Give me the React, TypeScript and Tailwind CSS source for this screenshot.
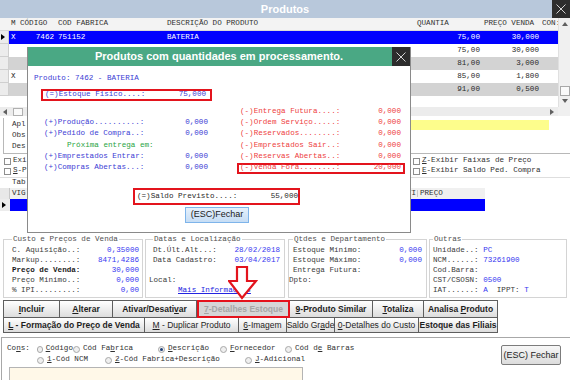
import React from 'react'

type Row = { m?: string; cod?: string; fab?: string; desc?: string; qtd: string; preco: string; sel?: boolean; grey?: boolean }

// rows 2-5 sit under the dialog, only their right-hand columns show
const rows: Row[] = [
  { m: 'X', cod: '7462', fab: '751152', desc: 'BATERIA', qtd: '75,00', preco: '30,000', sel: true },
  { qtd: '75,00', preco: '30,000' },
  { qtd: '81,00', preco: '3,000', grey: true },
  { m: 'X', qtd: '85,00', preco: '1,800' },
  { qtd: '91,00', preco: '0,500', grey: true },
]

const CloseX = () => (
  <svg width="10" height="10" viewBox="0 0 10 10">
    <path d="M0.5 0.5L9.5 9.5M9.5 0.5L0.5 9.5" stroke="#d4d4d4" strokeWidth="1" />
  </svg>
)

const Tri = ({ dir, color = '#606060' }: { dir: 'up' | 'down' | 'left' | 'right'; color?: string }) => {
  const d = {
    up: 'M0 4L3 0L6 4Z',
    down: 'M0 0L6 0L3 4Z',
    left: 'M4 0L4 6L0 3Z',
    right: 'M0 0L4 3L0 6Z',
  }[dir]
  return (
    <svg width="6" height="6" viewBox="0 0 6 6">
      <path d={d} fill={color} />
    </svg>
  )
}

const U = ({ children }: { children: React.ReactNode }) => <span className="underline">{children}</span>

function MainTable() {
  return (
    <div className="flex h-[89px]">
      <div className="flex w-[558px] flex-col">
        {/* header */}
        <div className="flex h-[13px] items-center border-b border-[#d8d8d8] bg-[#f3f3f3] text-[#303030]">
          <div className="w-[9px]" />
          <div className="w-[10px] pl-[2px]">M</div>
          <div className="w-[37px] pl-[1px]">CÓDIGO</div>
          <div className="w-[109px] pl-[2px]">COD FABRICA</div>
          <div className="w-[249px] pl-[2px]">DESCRIÇÃO DO PRODUTO</div>
          <div className="w-[68px] pl-[3px]">QUANTIA</div>
          <div className="w-[60px] pl-[2px]">PREÇO VENDA</div>
          <div className="w-[16px] overflow-hidden whitespace-nowrap">CON:</div>
        </div>
        {rows.map((r, i) => (
          <div key={i} className="flex h-[13px]">
            <div className="flex h-full w-[9px] items-center justify-center border-r border-b border-[#cfcfcf] bg-[#ececec]">
              {r.sel && <Tri dir="right" color="#000" />}
            </div>
            <div
              className={`flex flex-1 items-center ${
                r.sel ? 'bg-[#0000ff] text-white' : r.grey ? 'bg-[#d3d3d3] text-[#2a2a2a]' : 'bg-white text-[#2a2a2a]'
              }`}
            >
              <div className="w-[10px] pl-[2px]">{r.m}</div>
              <div className="w-[37px] pr-[2px] text-right">{r.cod}</div>
              <div className="w-[109px] pl-[2px]">{r.fab}</div>
              <div className="w-[249px] pl-[2px]">{r.desc}</div>
              <div className="w-[68px] pr-[2px] text-right">{r.qtd}</div>
              <div className="w-[60px] pr-[3px] text-right">{r.preco}</div>
              <div className="w-[15px]" />
            </div>
          </div>
        ))}
      </div>
      {/* vertical scrollbar */}
      <div className="flex w-[12px] flex-col items-center border-l border-[#e0e0e0] bg-[#f0f0f0]">
        <div className="flex h-[13px] items-center">
          <Tri dir="up" />
        </div>
        <div className="flex-1" />
        <div className="h-[10px] w-[10px] border border-[#a8a8a8] bg-[#fafafa]" />
        <div className="flex h-[11px] items-center">
          <Tri dir="down" />
        </div>
      </div>
    </div>
  )
}

function HScroll() {
  return (
    <div className="flex h-[9px] bg-[#ececec]">
      <div className="flex w-[558px] items-center">
        <div className="flex w-[11px] justify-center">
          <Tri dir="left" />
        </div>
        <div className="ml-[2px] h-[8px] w-[10px] border border-[#b0b0b0] bg-[#fafafa]" />
        <div className="flex-1" />
        <div className="flex w-[10px] justify-center">
          <Tri dir="right" />
        </div>
      </div>
      <div className="w-[12px] bg-[#f0f0f0]" />
    </div>
  )
}

// only the part left of the dialog shows
function InfoPanel() {
  return (
    <div className="h-[38px] pt-[2px]">
      <div className="ml-[3px] h-[36px] border-l border-b border-[#b8b8b8] pt-[1px] text-[#303030]">
        <div className="flex h-[11px] items-center pl-[8px]">
          <span className="w-[52px]">Apl</span>
          <div className="h-[10px] w-[485px] bg-[#fdfd8c]" />
        </div>
        <div className="flex h-[11px] items-center pl-[8px]">Obs</div>
        <div className="flex h-[11px] items-center pl-[8px]">Des</div>
      </div>
    </div>
  )
}

const Check = ({ children }: { children: React.ReactNode }) => (
  <div className="flex h-[10px] items-center">
    <div className="mr-[2px] h-[7px] w-[7px] border border-[#8e8e8e] bg-white" />
    <span className="text-[#303030]">{children}</span>
  </div>
)

function Checks() {
  return (
    <div className="flex h-[23px] pt-[2px]">
      <div className="w-[409px] pl-[4px]">
        <Check>Exi</Check>
        <Check>
          <U>S</U>-P
        </Check>
      </div>
      <div className="pl-[4px]">
        <Check>
          <U>Z</U>-Exibir Faixas de Preço
        </Check>
        <Check>
          <U>E</U>-Exibir Saldo Ped. Compra
        </Check>
      </div>
    </div>
  )
}

function PriceGrid() {
  return (
    <div className="h-[35px]">
      <div className="flex h-[11px] items-center border-t border-[#dedede] pl-[12px] text-[#303030]">Tab</div>
      <div className="flex h-[11px] w-[485px] items-center bg-[#f0f0f0] text-[#303030]">
        <div className="h-full w-[10px] border-r border-[#c8c8c8] bg-[#e8e8e8]" />
        <div className="w-[80px] pl-[2px]">VIG</div>
        <div className="w-[328px] border-r border-[#c8c8c8] pr-[1px] text-right whitespace-nowrap">TI</div>
        <div className="flex-1 pl-[2px]">PREÇO</div>
      </div>
      <div className="flex h-[12px] w-[485px]">
        <div className="flex w-[10px] items-center justify-center bg-[#ececec]">
          <Tri dir="right" color="#000" />
        </div>
        <div className="flex-1 bg-[#0000ff]" />
      </div>
    </div>
  )
}

const Line = ({ label, value, bold }: { label: string; value?: string; bold?: boolean }) => (
  <div className="flex h-[10.1px] items-center justify-between whitespace-nowrap">
    <span className={bold ? 'font-bold text-[#1a1a1a]' : ''}>{label}</span>
    {value && <span className="text-[#3838f0]">{value}</span>}
  </div>
)

function Groups() {
  return (
    <div className="flex h-[67px] pt-[3px] text-[#3a3a3a]">
      <fieldset className="ml-[3px] h-[62px] w-[140px] border border-[#d4d4d4] pr-[3px] pl-[8px]">
        <legend className="px-[1px] text-[#505050]">Custo e Preços de Venda</legend>
        <div className="pt-[2px]">
          <Line label="C. Aquisição..:" value="0,35000" />
          <Line label="Markup........:" value="8471,4286" />
          <Line label="Preço de Venda:" value="30,000" bold />
          <Line label="Preço Minimo..:" value="0,000" />
          <Line label="% IPI.........:" value="0,00" />
        </div>
      </fieldset>
      <fieldset className="ml-[2px] h-[62px] w-[140px] border border-[#d4d4d4] pr-[4px] pl-[7px]">
        <legend className="px-[1px] text-[#505050]">Datas e Localização</legend>
        <div className="pt-[2px]">
          <Line label="Dt.Últ.Alt...:" value="28/02/2018" />
          <Line label="Data Cadastro:" value="03/04/2017" />
          <div className="h-[10.1px]" />
          <div className="-ml-[4px] flex h-[10.1px] items-center">Local:</div>
          <div className="flex h-[10.1px] items-center pl-[25px]">
            <span className="text-[#2424e0] underline">Mais Informações</span>
          </div>
        </div>
      </fieldset>
      <fieldset className="ml-[3px] h-[62px] w-[139px] border border-[#d4d4d4] pr-[4px] pl-[4px]">
        <legend className="px-[1px] text-[#505050]">Qtdes e Departamento</legend>
        <div className="pt-[2px]">
          <Line label="Estoque Mínimo:" value="0,000" />
          <Line label="Estoque Máximo:" value="0,000" />
          <Line label="Entrega Futura:" />
          <div className="-ml-[4px] flex h-[10.1px] items-center">Dpto:</div>
        </div>
      </fieldset>
      <fieldset className="ml-[2px] h-[62px] w-[138px] border border-[#d4d4d4] pl-[3px]">
        <legend className="px-[1px] text-[#505050]">Outras</legend>
        <div className="pt-[2px] whitespace-pre">
          <div className="flex h-[10.1px] items-center">
            Unidade..: <span className="text-[#3838f0]">PC</span>
          </div>
          <div className="flex h-[10.1px] items-center">
            NCM......: <span className="text-[#3838f0]">73261900</span>
          </div>
          <div className="flex h-[10.1px] items-center">Cod.Barra:</div>
          <div className="flex h-[10.1px] items-center">
            CST/CSOSN: <span className="text-[#3838f0]">0500</span>
          </div>
          <div className="flex h-[10.1px] items-center">
            IAT......: <span className="text-[#3838f0]">A</span>  IPPT: <span className="text-[#3838f0]">T</span>
          </div>
        </div>
      </fieldset>
    </div>
  )
}

const Btn = ({ w, children, bold, first, top, disabled }: { w: string; children: React.ReactNode; bold?: boolean; first?: boolean; top?: boolean; disabled?: boolean }) => (
  <div
    className={`flex h-full items-center justify-center whitespace-nowrap ${w} ${bold ? 'font-bold' : ''} ${
      disabled
        ? 'border-2 border-[#e5121c] bg-[#d6d6d6] text-[#a5a5a5]'
        : `border-r border-b border-[#5e5e5e] bg-linear-to-b from-white to-[#dddddd] text-[#1e1e1e] ${first ? 'border-l' : ''} ${top ? 'border-t' : ''}`
    }`}
  >
    <span>{children}</span>
  </div>
)

function Buttons() {
  return (
    <div className="ml-[3px] w-[495px] font-['Liberation_Sans',Arial,sans-serif] text-[8.5px]">
      <div className="flex h-[18px]">
        <Btn w="w-[57px]" bold first top>
          <U>I</U>ncluir
        </Btn>
        <Btn w="w-[53px]" bold top>
          <U>A</U>lterar
        </Btn>
        <Btn w="w-[84px]" bold top>
          Ativar/Desati<U>v</U>ar
        </Btn>
        <Btn w="w-[93px]" bold disabled>
          <U>7</U>-Detalhes Estoque
        </Btn>
        <Btn w="w-[83px]" bold top>
          <U>9</U>-Produto Similar
        </Btn>
        <Btn w="w-[51px]" bold top>
          <U>T</U>otaliza
        </Btn>
        <Btn w="w-[74px]" bold top>
          Analisa <U>P</U>roduto
        </Btn>
      </div>
      <div className="flex h-[15px]">
        <Btn w="w-[142px]" bold first>
          <U>L</U> - Formação do Preço de Venda
        </Btn>
        <Btn w="w-[94px]">
          <U>M</U> - Duplicar Produto
        </Btn>
        <Btn w="w-[48px]">
          <U>6</U>-Imagem
        </Btn>
        <Btn w="w-[48px]">
          Saldo Gr<U>a</U>de
        </Btn>
        <Btn w="w-[84px]">
          <U>0</U>-Detalhes do Custo
        </Btn>
        <Btn w="w-[79px]" bold>
          Estoque das Filiais
        </Btn>
      </div>
    </div>
  )
}

const Radio = ({ w, checked, children }: { w?: string; checked?: boolean; children: React.ReactNode }) => (
  <div className={`flex items-center whitespace-nowrap ${w ?? ''}`}>
    <div className="mr-[3px] flex h-[7px] w-[7px] items-center justify-center rounded-full border border-[#a8a8a8] bg-[#efefef]">
      {checked && <div className="h-[3px] w-[3px] rounded-full bg-[#1d3f78]" />}
    </div>
    <span className="text-[#303030]">{children}</span>
  </div>
)

function BottomBar() {
  return (
    <div className="h-[47px] pt-[4px]">
      <div className="ml-[1px] flex h-[43px] border-t border-l border-[#a8a8a8]">
        <div className="flex-1 pt-[6px]">
          <div className="flex h-[10px] items-center">
            <span className="w-[35px] pl-[5px] text-[#303030]">
              Co<U>n</U>s:
            </span>
            <Radio w="w-[36px]">
              <U>C</U>ódigo
            </Radio>
            <Radio w="w-[85px]">
              Cód Fa<U>b</U>rica
            </Radio>
            <Radio w="w-[62px]" checked>
              <U>D</U>escrição
            </Radio>
            <Radio w="w-[65px]">
              <U>F</U>ornecedor
            </Radio>
            <Radio>
              Cód d<U>e</U> Barras
            </Radio>
          </div>
          <div className="mt-[1px] flex h-[10px] items-center">
            <span className="w-[35px]" />
            <Radio w="w-[68px]">
              <U>1</U>-Cód NCM
            </Radio>
            <Radio w="w-[140px]">
              <U>2</U>-Cód Fabrica+Descrição
            </Radio>
            <Radio>
              <U>J</U>-Adicional
            </Radio>
          </div>
          <div className="mt-[2px] ml-[7px] h-[15px] w-[294px] border border-[#b4b4b4] bg-[#fff8e8]" />
        </div>
        <div className="mt-[7px] mr-[9px] flex h-[20px] w-[60px] items-center justify-center rounded-[2px] border border-[#7c7c7c] bg-linear-to-b from-[#f7f7f7] to-[#dcdcdc] font-['Liberation_Sans',Arial,sans-serif] text-[9px] text-[#222]">
          (ESC) Fechar
        </div>
      </div>
    </div>
  )
}

const DRow = ({ label, value, color, boxed, indent }: { label?: string; value?: string; color: string; boxed?: boolean; indent?: boolean }) => (
  <div
    className={`flex h-[11.4px] items-center justify-between whitespace-nowrap border-2 ${color} ${
      boxed ? 'border-[#e3141d]' : 'border-transparent'
    } ${indent ? 'pl-[24px]' : 'pl-[1px]'} pr-[2px]`}
  >
    <span>{label}</span>
    {value && <span>{value}</span>}
  </div>
)

function Dialog() {
  const blue = 'text-[#3c3cd4]'
  const red = 'text-[#ee4040]'
  return (
    <div className="absolute top-[47px] left-[27px] flex h-[186px] w-[384px] flex-col border-x border-b border-[#8a8a8a] bg-white">
      <div className="flex h-[19px] bg-[#4aa884]">
        <div className="w-[18px]" />
        <div className="flex flex-1 items-center justify-center font-['Liberation_Sans',Arial,sans-serif] text-[11px] font-bold text-white">
          Produtos com quantidades em processamento.
        </div>
        <div className="flex w-[18px] items-center justify-center bg-[#2d2d2d]">
          <CloseX />
        </div>
      </div>
      <div className={`pt-[9px] pl-[6px] ${blue}`}>Produto: 7462 - BATERIA</div>
      <div className={`mt-[6px] ml-[13px] flex h-[12px] w-[171px] items-center justify-between border-2 border-[#e3141d] pr-[4px] pl-[2px] ${blue}`}>
        <span>(=)Estoque Fisico....:</span>
        <span>75,000</span>
      </div>
      <div className="mt-[5px] flex">
        <div className="ml-[13px] w-[171px]">
          <DRow color={blue} />
          <DRow color={blue} label="(+)Produção..........:" value="0,000" />
          <DRow color={blue} label="(+)Pedido de Compra..:" value="0,000" />
          <DRow color="text-[#28a443]" label="Próxima entrega em:" indent />
          <DRow color={blue} label="(+)Emprestados Entrar:" value="0,000" />
          <DRow color={blue} label="(+)Compras Abertas...:" value="0,000" />
        </div>
        <div className="ml-[25px] w-[168px]">
          <DRow color={red} label="(-)Entrega Futura....:" value="0,000" />
          <DRow color={red} label="(-)Ordem Serviço.....:" value="0,000" />
          <DRow color={red} label="(-)Reservados........:" value="0,000" />
          <DRow color={red} label="(-)Emprestados Sair..:" value="0,000" />
          <DRow color={red} label="(-)Reservas Abertas..:" value="0,000" />
          <DRow color={red} label="(-)Venda Fora........:" value="20,000" boxed />
        </div>
      </div>
      <div className="mt-[14px] ml-[105px] flex h-[17px] w-[167px] items-center justify-between border-2 border-[#e3141d] pl-[2px] text-[#2a2a2a]">
        <span>(=)Saldo Previsto....:</span>
        <span>55,000</span>
      </div>
      <div className="mt-[2px] ml-[157px] flex h-[16px] w-[64px] items-center justify-center border border-[#7eb4ea] bg-linear-to-b from-[#e6f1fc] to-[#c6ddf5] font-['Liberation_Sans',Arial,sans-serif] text-[9px] text-[#1a1a1a]">
        (ESC)Fechar
      </div>
    </div>
  )
}

const Arrow = () => (
  <svg className="absolute top-[266px] left-[228px]" width="30" height="34" viewBox="0 0 30 34">
    <path d="M9 1H19V15H28L14 32L1 15H9Z" fill="#fff" stroke="#e3141d" strokeWidth="2.2" strokeLinejoin="miter" />
  </svg>
)

export default function App() {
  return (
    <div className="relative h-[380px] w-[570px] overflow-hidden bg-white font-['Liberation_Mono',monospace] text-[7.6px] leading-none text-[#2a2a2a]">
      {/* title bar */}
      <div className="flex h-[18px] bg-[#b8c8db]">
        <div className="w-[18px]" />
        <div className="flex flex-1 items-center justify-center font-['Liberation_Sans',Arial,sans-serif] text-[11px] font-bold text-white">
          Produtos
        </div>
        <div className="flex w-[18px] items-center justify-center bg-[#2e2e2e]">
          <CloseX />
        </div>
      </div>
      <MainTable />
      <HScroll />
      <InfoPanel />
      <Checks />
      <PriceGrid />
      <div className="h-[21px]" />
      <Groups />
      <Buttons />
      <BottomBar />
      <Dialog />
      <Arrow />
    </div>
  )
}
